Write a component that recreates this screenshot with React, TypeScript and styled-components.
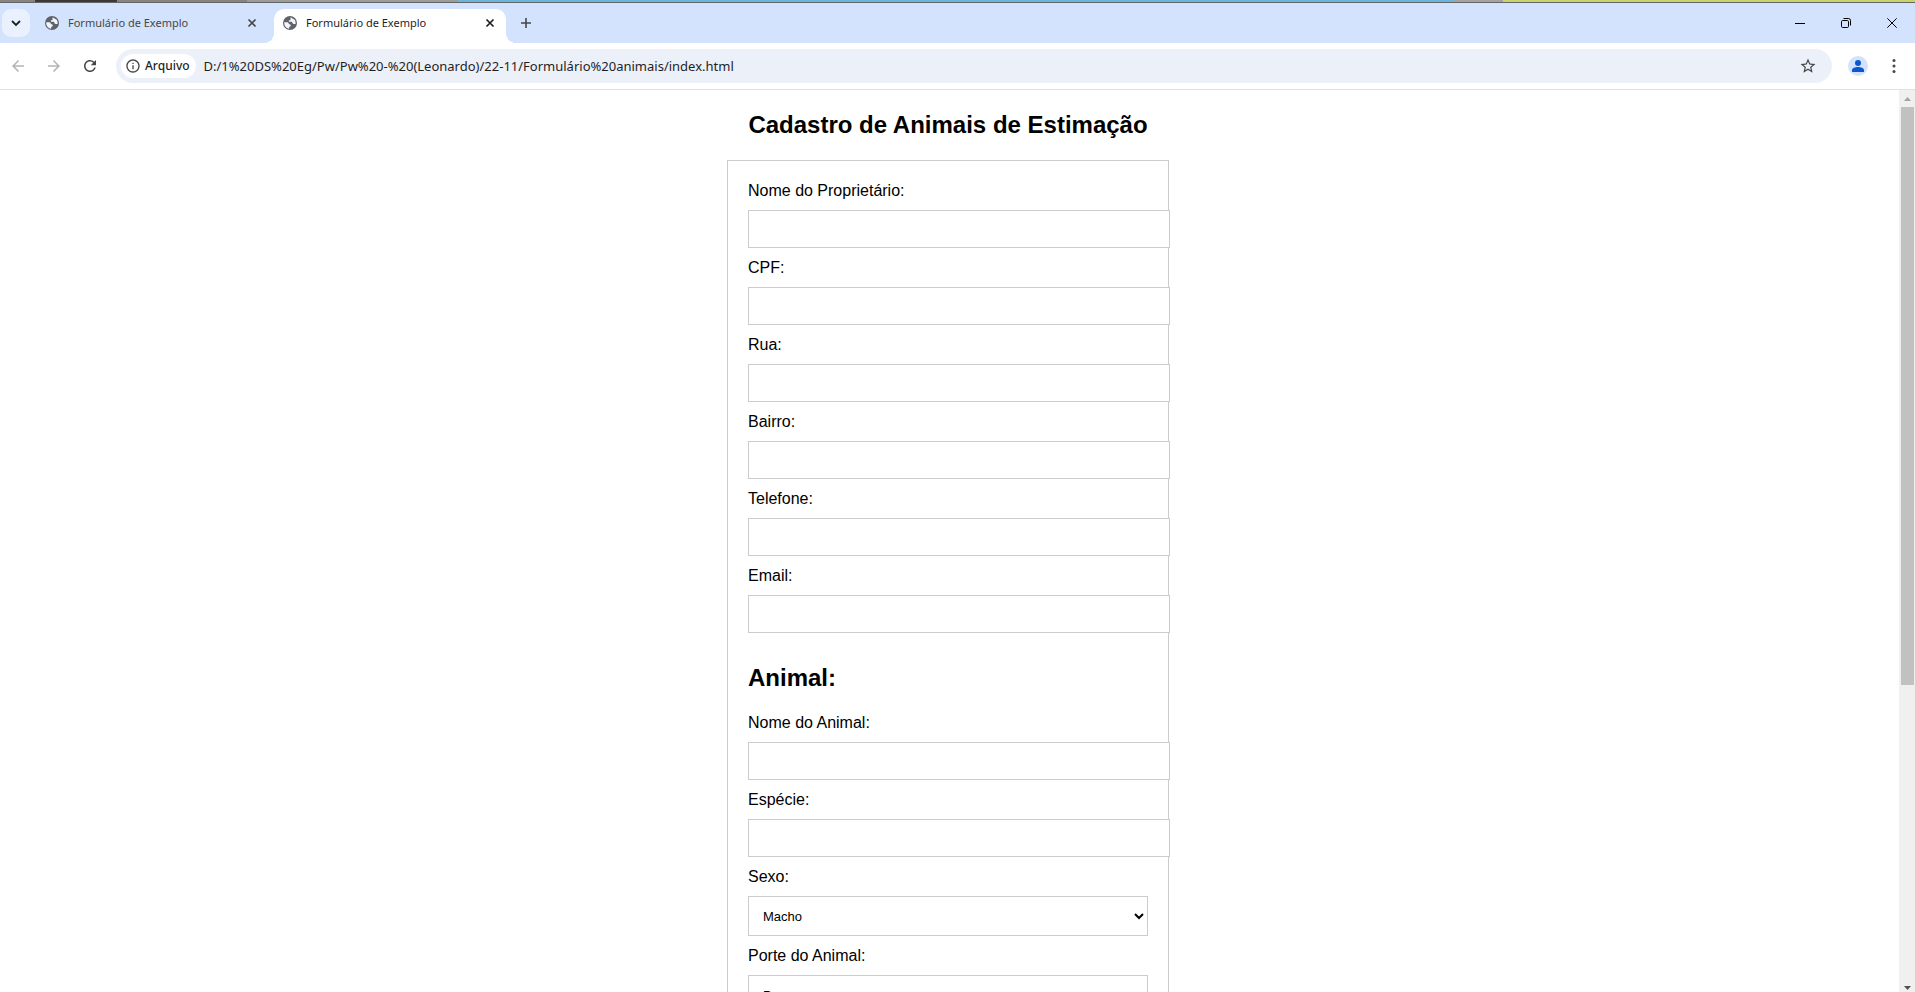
import React from "react";
import styled, { createGlobalStyle } from "styled-components";
import {
  MdArrowBack,
  MdArrowForward,
  MdInfoOutline,
  MdRefresh,
  MdStarBorder,
} from "react-icons/md";

const uiFont = `"Noto Sans", "Open Sans", sans-serif`;
const pageFont = `"Liberation Sans", Arial, sans-serif`;

const GlobalStyle = createGlobalStyle`
  * { box-sizing: border-box; }
  body { margin: 0; background: #fff; font-family: ${pageFont}; }
`;

const Window = styled.div`
  display: flex;
  flex-direction: column;
  height: 100vh;
  overflow: hidden;
`;

const Desktop = styled.div`
  display: flex;
  flex: none;
  height: 3px;
  border-bottom: 1px solid #62656a;
`;

const Strip = styled.span<{ $color: string; $grow: number }>`
  flex: ${(p) => p.$grow} 1 0;
  background: ${(p) => p.$color};
`;

const TabBar = styled.header`
  display: flex;
  flex: none;
  align-items: flex-start;
  height: 40px;
  padding: 6px 0 0 2px;
  background: #d3e3fd;
`;

const IconButton = styled.button`
  display: flex;
  flex: none;
  align-items: center;
  justify-content: center;
  width: 28px;
  height: 28px;
  padding: 0;
  border: 0;
  border-radius: 9px;
  background: none;
  color: #1f1f1f;
`;

const TabSearch = styled(IconButton)`
  background: #e9f1fe;
`;

const Tab = styled.div<{ $active?: boolean }>`
  position: relative;
  display: flex;
  align-items: center;
  flex: 0 1 ${(p) => (p.$active ? 232 : 244)}px;
  height: 34px;
  padding: ${(p) => (p.$active ? "0 8px 6px 8px" : "0 14px 6px 14px")};
  border-radius: 10px 10px 0 0;
  background: ${(p) => (p.$active ? "#fff" : "none")};
  color: ${(p) => (p.$active ? "#1f1f1f" : "#474747")};
  font: 11px/16px ${uiFont};

  &::before,
  &::after {
    content: "";
    display: ${(p) => (p.$active ? "block" : "none")};
    position: absolute;
    bottom: 0;
    width: 10px;
    height: 10px;
  }
  &::before {
    right: 100%;
    background: radial-gradient(circle at 0 0, transparent 10px, #fff 10px);
  }
  &::after {
    left: 100%;
    background: radial-gradient(circle at 100% 0, transparent 10px, #fff 10px);
  }
`;

const TabTitle = styled.span`
  flex: 1;
  padding-left: 8px;
  white-space: nowrap;
`;

const TabClose = styled(IconButton)`
  width: 16px;
  height: 16px;
  color: inherit;
`;

const NewTab = styled(IconButton)`
  margin-left: 6px;
  color: #474747;
`;

const WindowControls = styled.div`
  display: flex;
  margin-left: auto;
`;

const WindowButton = styled(IconButton)`
  width: 46px;
  color: #000;
`;

const Toolbar = styled.nav`
  display: flex;
  flex: none;
  align-items: center;
  gap: 8px;
  height: 47px;
  padding: 0 7px 0 4px;
  border-bottom: 1px solid #dfe1e5;
  background: #fff;
`;

const NavButton = styled(IconButton)<{ $dim?: boolean }>`
  color: ${(p) => (p.$dim ? "#b4b4b4" : "#474747")};
`;

const AddressBar = styled.div`
  display: flex;
  flex: 1;
  align-items: center;
  height: 34px;
  margin: 0 4px;
  padding: 0 10px 0 5px;
  border-radius: 17px;
  background: #ecf0f9;
`;

const SiteChip = styled.button`
  display: flex;
  flex: none;
  align-items: center;
  gap: 4px;
  height: 24px;
  padding: 0 6px 0 4px;
  border: 0;
  border-radius: 12px;
  background: #fff;
  color: #1f1f1f;
  font: 500 12px/16px ${uiFont};
`;

const UrlInput = styled.input`
  flex: 1;
  min-width: 0;
  height: 24px;
  padding: 0 8px;
  border: 0;
  outline: 0;
  background: none;
  color: #1f1f1f;
  font: 13px/20px ${uiFont};
`;

const StarButton = styled(IconButton)`
  color: #474747;
`;

const Viewport = styled.div`
  display: flex;
  flex: 1;
  min-height: 0;
`;

const Page = styled.main`
  display: flex;
  flex: 1;
  flex-direction: column;
  align-items: center;
  min-width: 0;
  padding-right: 3px;
  overflow: hidden;
  color: #000;
`;

const Heading = styled.h2`
  flex: none;
  margin: 21px 0;
  font-size: 24px;
  line-height: 28px;
`;

const Form = styled.form`
  flex: none;
  width: 442px;
  padding: 20px;
  border: 1px solid #ccc;
`;

const Label = styled.label`
  display: block;
  font-size: 16px;
  line-height: 19px;
`;

const TextInput = styled.input`
  display: block;
  box-sizing: content-box;
  width: 100%;
  height: 16px;
  margin: 10px 0;
  padding: 10px;
  border: 1px solid #ccc;
  background: #fff;
  font: 13px/16px ${pageFont};
`;

const Select = styled.select`
  display: block;
  width: 100%;
  height: 40px;
  margin: 10px 0;
  padding: 10px;
  border: 1px solid #ccc;
  border-radius: 0;
  background: #fff;
  color: #000;
  font: 13px/16px ${pageFont};
`;

const FormHeading = styled(Heading)`
  margin-top: 31px;
`;

const ScrollBar = styled.div`
  display: flex;
  flex: none;
  flex-direction: column;
  width: 16px;
  padding: 0 1px 0 2px;
  background: #f0f0f0;
`;

const ScrollArrow = styled.span<{ $color: string; $down?: boolean }>`
  display: flex;
  flex: none;
  align-items: center;
  justify-content: center;
  height: ${(p) => (p.$down ? 9 : 17)}px;
  color: ${(p) => p.$color};
`;

const ScrollTrack = styled.div`
  flex: 1;
`;

const ScrollThumb = styled.div`
  height: 66%;
  background: #c1c1c1;
`;

const strips: [string, number][] = [
  ["#85847f", 35],
  ["#3a3936", 82],
  ["#85847f", 130],
  ["#9b9b97", 211],
  ["#6cb5da", 995],
  ["#a5a3a1", 50],
  ["#c6d569", 412],
];

const Globe = () => (
  <svg width="16" height="16" viewBox="0 0 16 16" aria-hidden="true">
    <circle cx="8" cy="8" r="7" fill="#5f6368" />
    <path
      d="M8.600 2.300 13 4.900l.8 3.600c-1 .7-2.300.8-3 0-.6-.7-.3-1.600-1.300-1.700H6.900V5.200h1.200c.8-.2.300-1.300.5-2.900zM2.200 7.300h3.100c1.500.1 1.200 1.700 2.200 1.900 1.300.2 1.400 1 1.300 1.900l-1.600.8v1.900C4.200 13.500 2 10.900 2.200 7.300z"
      fill="#f1f6fe"
    />
  </svg>
);

const Cross = () => (
  <svg width="10" height="10" viewBox="0 0 10 10" aria-hidden="true">
    <path d="M1.500 1.500l7 7M8.500 1.500l-7 7" stroke="currentColor" strokeWidth="1.700" />
  </svg>
);

const ownerFields = ["Nome do Proprietário:", "CPF:", "Rua:", "Bairro:", "Telefone:", "Email:"];
const animalFields = ["Nome do Animal:", "Espécie:"];

const Field = ({ id, label }: { id: string; label: string }) => (
  <>
    <Label htmlFor={id}>{label}</Label>
    <TextInput id={id} type="text" />
  </>
);

export default function App() {
  return (
    <Window>
      <GlobalStyle />
      <Desktop>
        {strips.map(([color, grow], i) => (
          <Strip key={i} $color={color} $grow={grow} />
        ))}
      </Desktop>
      <TabBar>
        <TabSearch aria-label="Pesquisar guias">
          <svg width="10" height="10" viewBox="0 0 10 10" aria-hidden="true">
            <path d="M1 3l4 4 4-4" fill="none" stroke="currentColor" strokeWidth="1.800" />
          </svg>
        </TabSearch>
        <Tab>
          <Globe />
          <TabTitle>Formulário de Exemplo</TabTitle>
          <TabClose aria-label="Fechar"><Cross /></TabClose>
        </Tab>
        <Tab $active>
          <Globe />
          <TabTitle>Formulário de Exemplo</TabTitle>
          <TabClose aria-label="Fechar"><Cross /></TabClose>
        </Tab>
        <NewTab aria-label="Nova guia">
          <svg width="12" height="12" viewBox="0 0 12 12" aria-hidden="true">
            <path d="M6 1v10M1 6h10" stroke="currentColor" strokeWidth="1.600" />
          </svg>
        </NewTab>
        <WindowControls>
          <WindowButton aria-label="Minimizar">
            <svg width="10" height="10" viewBox="0 0 10 10" aria-hidden="true">
              <path d="M0 5.500h10" stroke="currentColor" />
            </svg>
          </WindowButton>
          <WindowButton aria-label="Restaurar">
            <svg width="10" height="10" viewBox="0 0 10 10" fill="none" stroke="currentColor" aria-hidden="true">
              <rect x=".5" y="2.500" width="7" height="7" rx="1.200" />
              <path d="M2.500.5H7.500a2 2 0 0 1 2 2v5" />
            </svg>
          </WindowButton>
          <WindowButton aria-label="Fechar janela">
            <svg width="10" height="10" viewBox="0 0 10 10" aria-hidden="true">
              <path d="M.3.3l9.400 9.400M9.700.3L.3 9.700" stroke="currentColor" />
            </svg>
          </WindowButton>
        </WindowControls>
      </TabBar>
      <Toolbar>
        <NavButton $dim aria-label="Voltar">
          <MdArrowBack size={18} />
        </NavButton>
        <NavButton $dim aria-label="Avançar">
          <MdArrowForward size={18} />
        </NavButton>
        <NavButton aria-label="Recarregar">
          <MdRefresh size={18} />
        </NavButton>
        <AddressBar>
          <SiteChip>
            <MdInfoOutline size={16} color="#474747" />
            Arquivo
          </SiteChip>
          <UrlInput
            aria-label="Endereço"
            defaultValue="D:/1%20DS%20Eg/Pw/Pw%20-%20(Leonardo)/22-11/Formulário%20animais/index.html"
          />
          <StarButton aria-label="Favoritos">
            <MdStarBorder size={18} />
          </StarButton>
        </AddressBar>
        <IconButton aria-label="Perfil">
          <svg width="20" height="20" viewBox="0 0 20 20" aria-hidden="true">
            <circle cx="10" cy="10" r="10" fill="#d3e3fd" />
            <circle cx="10" cy="7" r="3" fill="#0b57d0" />
            <path d="M4 16v-1.800c0-2 3-3.200 6-3.200s6 1.200 6 3.200V16z" fill="#0b57d0" />
          </svg>
        </IconButton>
        <IconButton aria-label="Menu">
          <svg width="4" height="14" viewBox="0 0 4 14" fill="#474747" aria-hidden="true">
            <circle cx="2" cy="1.500" r="1.500" />
            <circle cx="2" cy="7" r="1.500" />
            <circle cx="2" cy="12.500" r="1.500" />
          </svg>
        </IconButton>
      </Toolbar>
      <Viewport>
        <Page>
          <Heading>Cadastro de Animais de Estimação</Heading>
          <Form>
            {ownerFields.map((label, i) => (
              <Field key={label} id={`dono-${i}`} label={label} />
            ))}
            <FormHeading>Animal:</FormHeading>
            {animalFields.map((label, i) => (
              <Field key={label} id={`animal-${i}`} label={label} />
            ))}
            <Label htmlFor="sexo">Sexo:</Label>
            <Select id="sexo">
              <option>Macho</option>
              <option>Fêmea</option>
            </Select>
            <Label htmlFor="porte">Porte do Animal:</Label>
            <Select id="porte">
              <option>Pequeno</option>
              <option>Médio</option>
              <option>Grande</option>
            </Select>
          </Form>
        </Page>
        <ScrollBar aria-hidden="true">
          <ScrollArrow $color="#a3a3a3">
            <svg width="7" height="4" viewBox="0 0 7 4"><path d="M0 4l3.500-4L7 4z" fill="currentColor" /></svg>
          </ScrollArrow>
          <ScrollTrack>
            <ScrollThumb />
          </ScrollTrack>
          <ScrollArrow $color="#505050" $down>
            <svg width="7" height="4" viewBox="0 0 7 4"><path d="M0 0l3.500 4L7 0z" fill="currentColor" /></svg>
          </ScrollArrow>
        </ScrollBar>
      </Viewport>
    </Window>
  );
}
